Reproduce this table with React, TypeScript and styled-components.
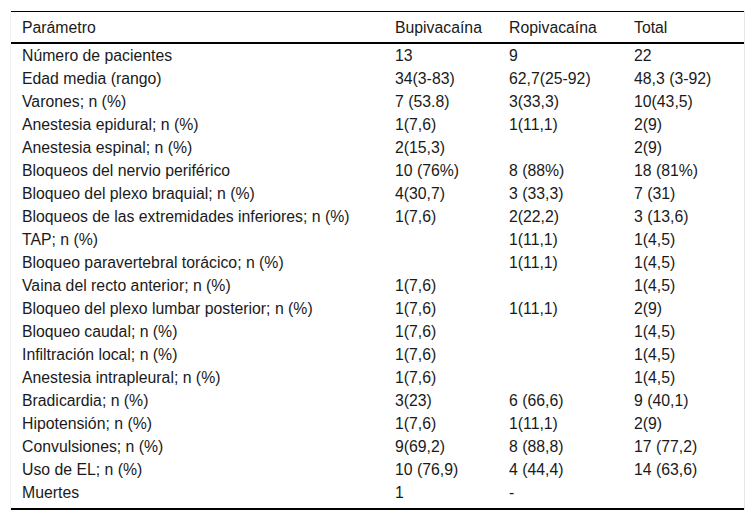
import React from "react";
import styled, { createGlobalStyle } from "styled-components";

const Global = createGlobalStyle`
  html, body { margin: 0; padding: 0; background: #fff; }
  body { font-family: "Liberation Sans", Arial, sans-serif; }
`;

const Frame = styled.div`
  padding: 11px 11px 0 11px;
  width: 756px;
  box-sizing: border-box;
`;

const Scroller = styled.div`
  border-right: 1px solid #e6e6e6;
  border-left: 1px solid #f2f2f2;
  margin-left: -1px;
  width: 735px;
  box-sizing: border-box;
`;

const Table = styled.table`
  border-collapse: collapse;
  width: 733px;
  font-size: 15.8px;
  color: #1a1a1a;
  border-top: 1px solid #000;
  border-bottom: 2px solid #000;
`;

const Head = styled.th<{ $w: number }>`
  text-align: left;
  font-weight: normal;
  padding: 6px 11px 5px 11px;
  line-height: 19px;
  width: ${(p) => p.$w}px;
  border-bottom: 2px solid #000;
`;

const Cell = styled.td<{ $last?: boolean }>`
  padding: 2px 11px ${(p) => (p.$last ? "6px" : "2px")} 11px;
  line-height: 19px;
  vertical-align: top;
  white-space: nowrap;
`;

const rows: string[][] = [
  ["Número de pacientes", "13", "9", "22"],
  ["Edad media (rango)", "34(3-83)", "62,7(25-92)", "48,3 (3-92)"],
  ["Varones; n (%)", "7 (53.8)", "3(33,3)", "10(43,5)"],
  ["Anestesia epidural; n (%)", "1(7,6)", "1(11,1)", "2(9)"],
  ["Anestesia espinal; n (%)", "2(15,3)", "", "2(9)"],
  ["Bloqueos del nervio periférico", "10 (76%)", "8 (88%)", "18 (81%)"],
  ["Bloqueo del plexo braquial; n (%)", "4(30,7)", "3 (33,3)", "7 (31)"],
  ["Bloqueos de las extremidades inferiores; n (%)", "1(7,6)", "2(22,2)", "3 (13,6)"],
  ["TAP; n (%)", "", "1(11,1)", "1(4,5)"],
  ["Bloqueo paravertebral torácico; n (%)", "", "1(11,1)", "1(4,5)"],
  ["Vaina del recto anterior; n (%)", "1(7,6)", "", "1(4,5)"],
  ["Bloqueo del plexo lumbar posterior; n (%)", "1(7,6)", "1(11,1)", "2(9)"],
  ["Bloqueo caudal; n (%)", "1(7,6)", "", "1(4,5)"],
  ["Infiltración local; n (%)", "1(7,6)", "", "1(4,5)"],
  ["Anestesia intrapleural; n (%)", "1(7,6)", "", "1(4,5)"],
  ["Bradicardia; n (%)", "3(23)", "6 (66,6)", "9 (40,1)"],
  ["Hipotensión; n (%)", "1(7,6)", "1(11,1)", "2(9)"],
  ["Convulsiones; n (%)", "9(69,2)", "8 (88,8)", "17 (77,2)"],
  ["Uso de EL; n (%)", "10 (76,9)", "4 (44,4)", "14 (63,6)"],
  ["Muertes", "1", "-", ""],
];

const headers: [string, number][] = [
  ["Parámetro", 373],
  ["Bupivacaína", 114],
  ["Ropivacaína", 125],
  ["Total", 121],
];

export default function App() {
  return (
    <>
      <Global />
      <Frame>
        <Scroller>
          <Table>
            <thead>
              <tr>
                {headers.map(([h, w]) => (
                  <Head key={h} $w={w - 22}>
                    {h}
                  </Head>
                ))}
              </tr>
            </thead>
            <tbody>
              {rows.map((r, i) => (
                <tr key={i}>
                  {r.map((c, j) => (
                    <Cell key={j} $last={i === rows.length - 1}>
                      {c}
                    </Cell>
                  ))}
                </tr>
              ))}
            </tbody>
          </Table>
        </Scroller>
      </Frame>
    </>
  );
}
